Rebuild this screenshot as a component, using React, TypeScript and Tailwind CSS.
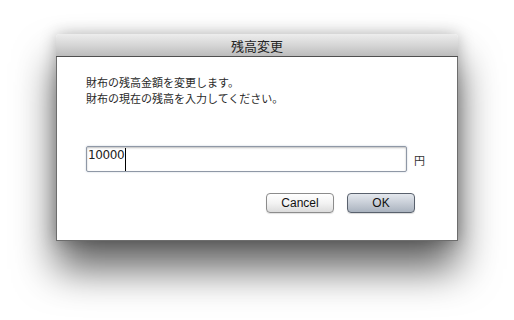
import React from "react";

export default function App() {
  return (
    <div className="w-[514px] h-[320px] bg-white pt-[34px] pl-[56px] font-['Noto_Sans_CJK_JP',sans-serif]">
      <div className="w-[402px] rounded-t-[4px] shadow-[0_28px_40px_rgba(0,0,0,0.62),0_0_16px_rgba(0,0,0,0.25)]">
        {/* タイトルバー */}
        <div className="h-[23px] rounded-t-[4px] border-b border-[#4f4f4f] bg-gradient-to-b from-[#ededed] via-[#d6d6d6] to-[#bcbcbc] flex items-center justify-center pt-[1px]">
          <span className="text-[13px] leading-none text-[#262626]">残高変更</span>
        </div>

        {/* 本文 */}
        <div className="bg-white border-x border-b border-[#6d6d6d] pt-[17px] pb-[27px] pl-[29px] pr-[42px]">
          <div className="text-[11px] leading-[16px] text-[#2a2a2a]">
            <p>財布の残高金額を変更します。</p>
            <p>財布の現在の残高を入力してください。</p>
          </div>

          <div className="mt-[40px] flex items-center">
            <div className="shrink-0 w-[321px] h-[26px] border border-[#8f98a6] rounded-[2px] shadow-[inset_0_1px_2px_rgba(0,0,0,0.25),0_0_2px_rgba(90,110,150,0.35)] flex items-start pl-[1px] pt-[1px]">
              <span className="font-['DejaVu_Sans',sans-serif] text-[12px] leading-[14px] text-[#222] tracking-[-0.4px]">10000</span>
              <span className="w-[1px] h-[23px] bg-black ml-[1px]" />
            </div>
            <span className="shrink-0 ml-[7px] mt-[2px] text-[11px] text-[#333]">円</span>
          </div>

          <div className="mt-[21px] flex justify-end gap-[13px]">
            <button className="w-[68px] h-[20px] rounded-[4px] border border-[#8c8c8c] bg-gradient-to-b from-white via-[#f3f3f3] to-[#dcdcdc] shadow-[0_1px_1px_rgba(0,0,0,0.12)] font-['Liberation_Sans',sans-serif] text-[12px] leading-none text-[#111]">
              Cancel
            </button>
            <button className="w-[68px] h-[20px] rounded-[4px] border border-[#59616d] bg-gradient-to-b from-[#e4e8ee] via-[#c8ced7] to-[#aab3bf] shadow-[0_1px_1px_rgba(0,0,0,0.15)] font-['Liberation_Sans',sans-serif] text-[12px] leading-none text-[#111]">
              OK
            </button>
          </div>
        </div>
      </div>
    </div>
  );
}
